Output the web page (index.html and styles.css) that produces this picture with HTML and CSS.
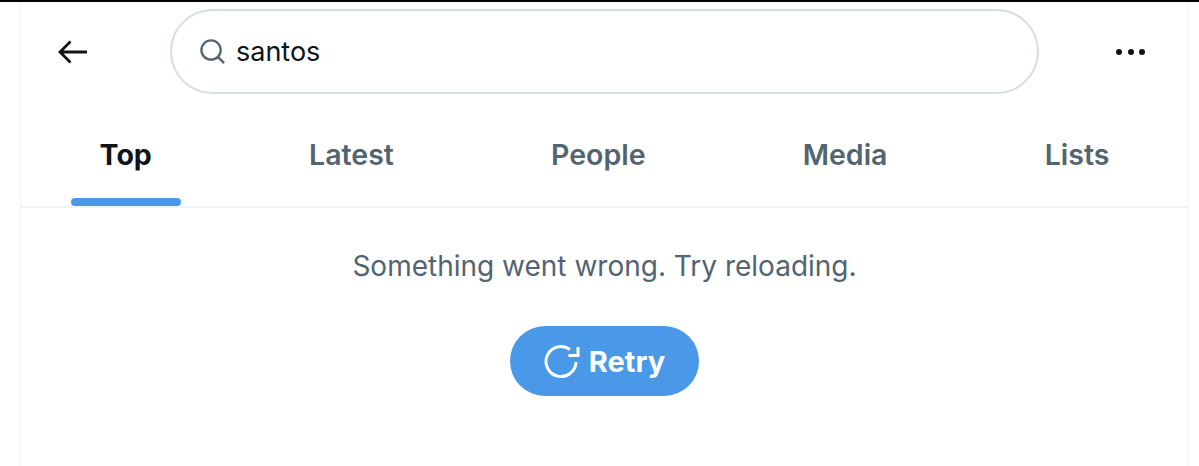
FILE: index.html
```html
<!DOCTYPE html>
<html lang="en">
<head>
  <meta charset="UTF-8">
  <title>santos - Search</title>
  <link rel="stylesheet" href="styles.css">
</head>
<body>

<div class="column">
  <div class="search-bar">
    <button class="back-btn" aria-label="Back">
      <svg viewBox="0 0 30 24" width="30" height="24"><path d="M29 12H2.5M12.5 1.5 2 12l10.5 10.5" fill="none" stroke="#0f1419" stroke-width="2.8"/></svg>
    </button>
    <div class="search-box">
      <svg viewBox="0 0 28 28" width="27" height="27"><circle cx="12.5" cy="12.5" r="10" fill="none" stroke="#536471" stroke-width="2.4"/><path d="M19.8 19.8 26 26" fill="none" stroke="#536471" stroke-width="2.4"/></svg>
      <span class="search-text">santos</span>
    </div>
    <div class="more-btn">
      <span class="dot"></span><span class="dot"></span><span class="dot"></span>
    </div>
  </div>

  <div class="tabs">
    <div class="tab active"><span class="tab-label">Top</span></div>
    <div class="tab"><span class="tab-label">Latest</span></div>
    <div class="tab"><span class="tab-label">People</span></div>
    <div class="tab"><span class="tab-label">Media</span></div>
    <div class="tab"><span class="tab-label">Lists</span></div>
  </div>

  <div class="error">
    <p class="error-text">Something went wrong. Try reloading.</p>
    <button class="retry-btn">
      <svg viewBox="0 0 36 36" width="36" height="36"><path d="M32 19A15 15 0 1 1 26 6.5" fill="none" stroke="#fff" stroke-width="3"/><path d="M34 4V12.5H24.5" fill="none" stroke="#fff" stroke-width="3"/></svg>
      <span>Retry</span>
    </button>
  </div>
</div>

</body>
</html>
```

FILE: styles.css
```css
* {
  box-sizing: border-box;
}

html, body {
  height: 100%;
}

body {
  margin: 0;
  font-family: Inter, "Noto Sans", Arial, sans-serif;
  color: #0f1419;
  background: white;
  border-top: 2px solid #000;
  overflow: hidden;
}

.column {
  width: 1169px;
  height: 100%;
  margin-left: 20px;
  border-left: 1px solid #eff3f4;
  border-right: 1px solid #eff3f4;
}

.search-bar {
  display: flex;
  align-items: center;
  height: 92px;
  padding-top: 7px;
}

.back-btn {
  display: flex;
  width: 149px;
  padding: 0 0 0 37px;
  border: none;
  background: none;
}

.search-box {
  display: flex;
  align-items: center;
  gap: 10px;
  width: 869px;
  height: 85px;
  padding-left: 27px;
  border: 2px solid #d5dee2;
  border-radius: 43px;
}

.search-text {
  font-size: 27px;
}

.more-btn {
  display: flex;
  gap: 5.5px;
  margin-left: 77px;
}

.dot {
  width: 6px;
  height: 6px;
  border-radius: 50%;
  background: #0f1419;
}

.tabs {
  display: flex;
  height: 114px;
  border-bottom: 2px solid #eff3f4;
}

.tab {
  flex: 1 1 auto;
  display: flex;
  justify-content: center;
  font-size: 28.5px;
  font-weight: 600;
  color: #536471;
}

.tab-label {
  position: relative;
  padding-top: 44px;
  line-height: 34px;
}

.tab.active {
  color: #0f1419;
  font-weight: 700;
}

.tab.active .tab-label::after {
  content: "";
  position: absolute;
  left: -29px;
  right: -29px;
  bottom: 0;
  height: 8px;
  border-radius: 4px;
  background: #4a99e9;
}

.error {
  display: flex;
  flex-direction: column;
  align-items: center;
}

.error-text {
  margin: 40px 0 0;
  font-size: 28px;
  line-height: 36px;
  color: #536471;
}

.retry-btn {
  display: flex;
  align-items: center;
  gap: 9px;
  height: 70px;
  margin-top: 42px;
  padding: 0 34px;
  border: none;
  border-radius: 35px;
  background: #4a99e9;
  color: white;
  font-family: inherit;
  font-size: 29px;
  font-weight: 700;
}
```
